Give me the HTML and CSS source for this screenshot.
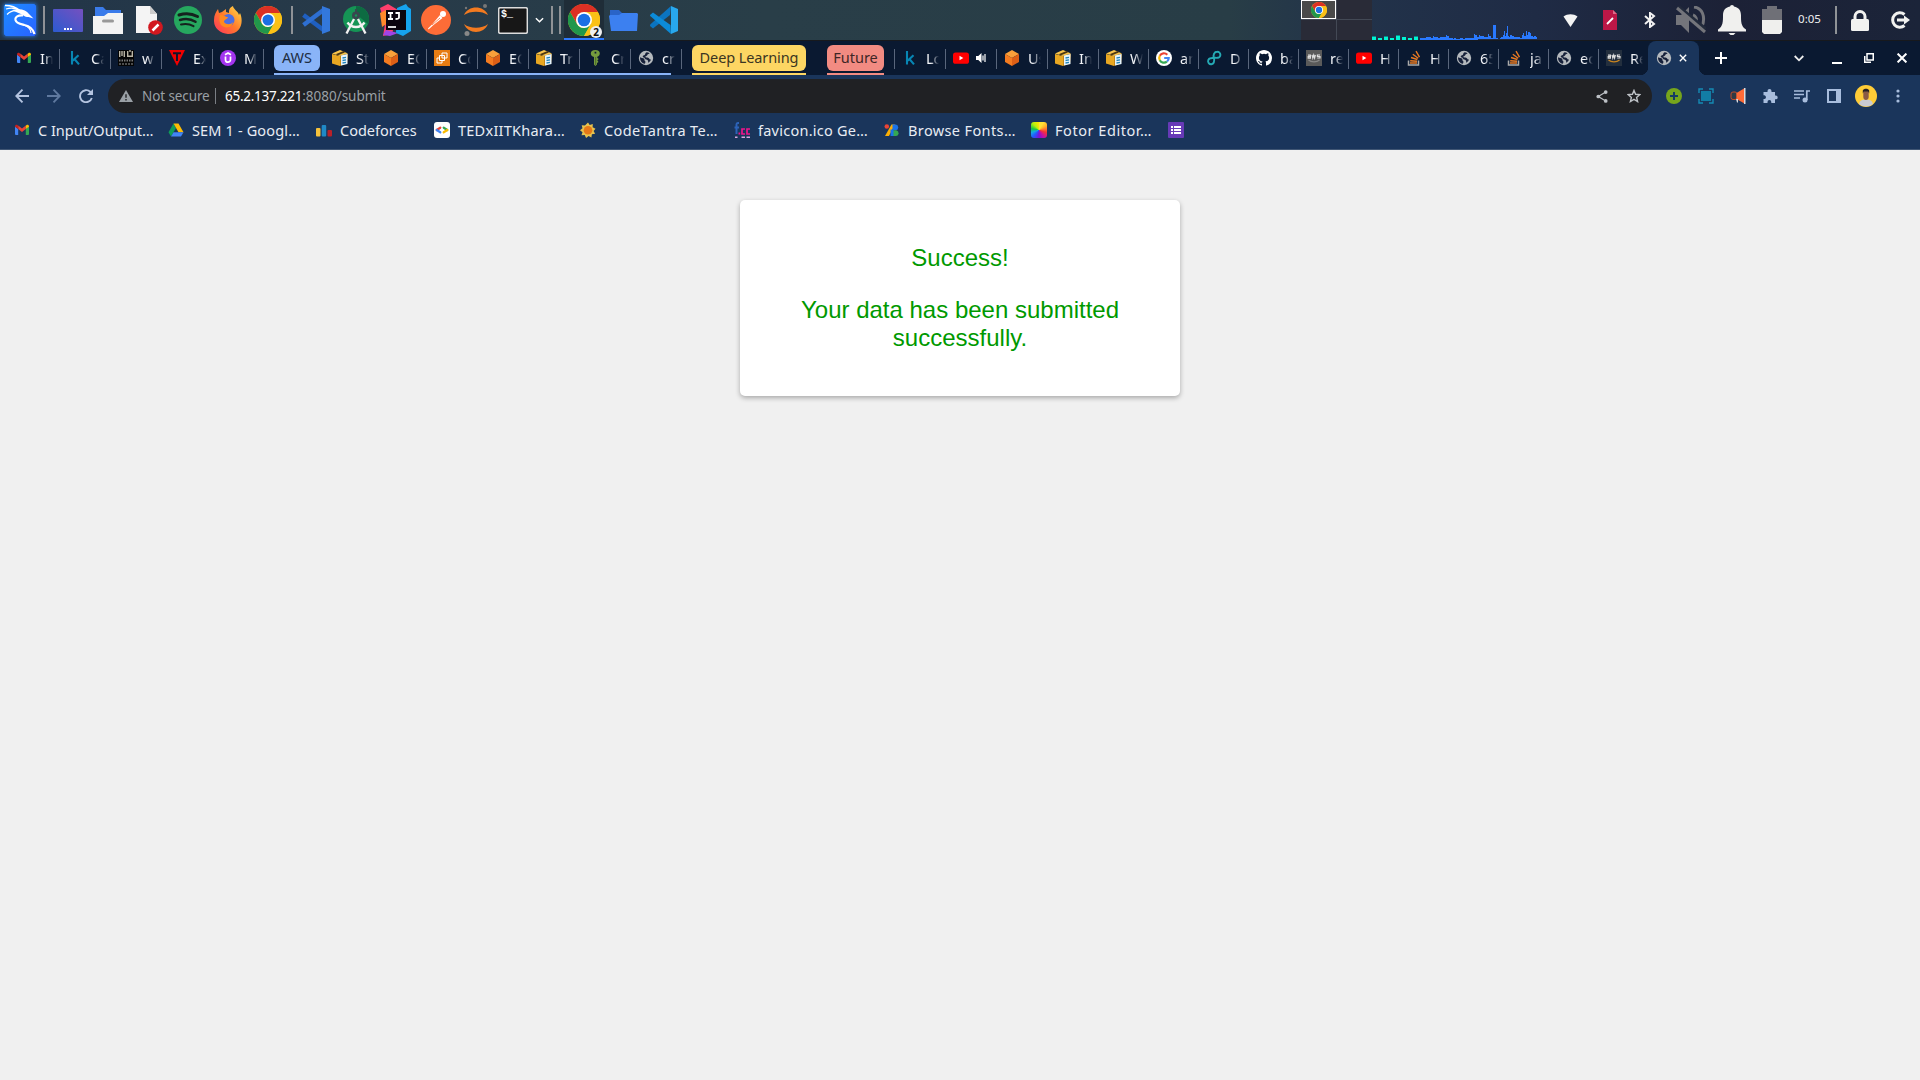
FILE: index.html
```html
<!DOCTYPE html>
<html lang="en">
<head>
<meta charset="utf-8">
<title>Submitted</title>
<link rel="stylesheet" href="styles.css">
</head>
<body>
<svg class="defs" width="0" height="0">
  <defs>
    <linearGradient id="gk" x1="0" y1="0" x2="1" y2="1"><stop offset="0" stop-color="#1b8cff"/><stop offset="1" stop-color="#2a62ff"/></linearGradient>
    <linearGradient id="gd" x1="0" y1="1" x2="1" y2="0"><stop offset="0" stop-color="#2c5bd0"/><stop offset="1" stop-color="#7550c0"/></linearGradient>
    <linearGradient id="gf" x1="0" y1="1" x2="1" y2="0"><stop offset="0" stop-color="#ff2f61"/><stop offset=".5" stop-color="#ff7a2b"/><stop offset="1" stop-color="#ffe34a"/></linearGradient>
  </defs>
  <symbol id="gmail" viewBox="0 0 16 16"><path fill="#4285f4" d="M1 4.5V12a1 1 0 0 0 1 1h2.2V7z"/><path fill="#34a853" d="M11.8 13H14a1 1 0 0 0 1-1V4.5L11.8 7z"/><path fill="#ea4335" d="M4.2 7V3.6L8 6.5l3.8-2.9V7L8 9.9z"/><path fill="#c5221f" d="M1 4.5C1 2.9 2.6 2.5 3.6 3.2l.6.4V7L1 4.7z"/><path fill="#fbbc04" d="M15 4.5c0-1.6-1.6-2-2.6-1.3l-.6.4V7L15 4.7z"/></symbol>
  <symbol id="kaggle" viewBox="0 0 16 16"><path fill="none" stroke="#0786b4" stroke-width="2.100" d="M5 1v13.6M11.5 5.2 5.6 10.8M7.4 9l4.6 5.4"/></symbol>
  <symbol id="mu" viewBox="0 0 16 16"><path fill="#050505" d="M0 0h16v16H0z"/><path fill="none" stroke="#b9b4a4" stroke-width="1.400" d="M1.700 7V1M4 1v5M6.300 7V1M9.700 1v5.300M14.300 1v5.300M9 6.300h6M12 0v2"/><path stroke="#777" stroke-width="2" stroke-dasharray="1.500 1" d="M1 10.500h14"/><path stroke="#666" stroke-width="1.500" stroke-dasharray="2 1" d="M1 14h14"/></symbol>
  <symbol id="tri" viewBox="0 0 16 16"><path fill="#f00000" d="M0 0h16L8 16z"/><path fill="none" stroke="#14142a" stroke-width="2" d="M4 3.200h8M8 3v8"/></symbol>
  <symbol id="udemy" viewBox="0 0 16 16"><circle cx="8" cy="8" r="8" fill="#a435f0"/><path fill="none" stroke="#fff" stroke-width="1.700" d="M5.500 6.500v3.200a2.500 2.500 0 0 0 5 0V6.500M5 4.800 8 3l3 1.800"/></symbol>
  <symbol id="box" viewBox="0 0 16 16"><path fill="#e8a722" d="M0 4l8 2v10l-8-2.500z"/><path fill="#c48415" d="M8 6l8-2-1 9.500L8 16z"/><path fill="#f8c54b" d="M0 3.500 8 0l8 3.500L8 6z"/><path stroke="#4d3813" stroke-width="1.800" d="m4.500 4.800 8-3.200"/><path fill="#e7f4fb" d="M9 5.500 15.500 4v10L9 15.500z"/><path fill="none" stroke="#2083bb" stroke-width="1.300" d="m10.500 8 3.500-.6M10.500 10.500l3.500-.6M10.500 13l3.500-.6"/></symbol>
  <symbol id="hex" viewBox="0 0 16 16"><path fill="#f9a03a" d="M8 0 15 4 8 8 1 4z"/><path fill="#f47b20" d="M1 4l7 4v8l-7-4z"/><path fill="#dd5f16" d="M15 4 8 8v8l7-4z"/></symbol>
  <symbol id="ecs" viewBox="0 0 16 16"><path fill="#e67c13" d="M0 0h16v16H0z"/><path fill="none" stroke="#fff" stroke-width="1" d="M8 3h5v5H8zM5.500 5.500h5v5h-5zM5.500 8H3v5h5v-2.500"/></symbol>
  <symbol id="keys" viewBox="0 0 16 16"><path fill="#759c3e" fill-rule="evenodd" d="M3.800 3.500a4.500 3.500 0 0 1 9 0c0 1.500-1 2.800-2.500 3.300V8l1.500 1-1.500 1.200L11.500 12 10 13v1.500L8.300 16 7 14.500V7c-2-.5-3.200-1.800-3.200-3.500zm3.800-1.700v1.700h1.700V1.800z"/><path stroke="#4a6b2a" d="M8.700 7v8"/></symbol>
  <symbol id="globe" viewBox="0 0 16 16"><circle cx="8" cy="8" r="7.200" fill="#b4b9bd"/><path fill="#17213a" d="M2 7.200c1.500 1 3.200.4 4.200 1.600.6.900-.2 1.600.8 2.300.8.600.3 1.800-.1 2.600C3.500 13.200 1.900 10.200 2 7.200zM8.500 2.200c1.200.1 2.300.5 3.200 1.200l-1.900.9c-.6.500-.3 1.300-1.400 1.600-.9.200-1.500.8-.7 1.400.9.500 2.400.1 3.200.9.700.800 1 1.600 2.100 1.300-.4 1.400-1.400 2.500-2.600 3.200-.6-.8.200-1.600-.7-2.500-.8-.8-2.400-.5-2.800-1.800-.3-1.300-2-.7-2.200-2 .1-1.200 1.400-.6 2-1.300.8-.9.100-1.800 1.800-2.900z"/></symbol>
  <symbol id="youtube" viewBox="0 0 16 16"><rect y="2.400" width="16" height="11.400" rx="2.600" fill="#f00"/><path fill="#fff" d="M6.500 5.700v4.600l3.800-2.300z"/></symbol>
  <symbol id="speaker" viewBox="0 0 12 12"><path fill="#fff" d="M1 4h2.300L6.500 1v10L3.300 8H1z"/><path fill="none" stroke="#fff" stroke-width="1.200" d="M8 3.500v5M10 2v8"/></symbol>
  <symbol id="google" viewBox="0 0 16 16"><circle cx="8" cy="8" r="8" fill="#fff"/><g fill="none" stroke-width="2.200"><path stroke="#ea4335" d="M3.800 5.700A4.700 4.700 0 0 1 11.300 4.700"/><path stroke="#fbbc05" d="M3.900 5.600a4.700 4.700 0 0 0 0 4.800"/><path stroke="#34a853" d="M3.800 10.200a4.700 4.700 0 0 0 7.100 1.400"/><path stroke="#4285f4" d="M8.200 8h4.500c0 1.600-.6 2.700-1.600 3.500"/></g></symbol>
  <symbol id="knot" viewBox="0 0 16 16"><path fill="none" stroke="#25a9b4" stroke-width="1.900" d="M8 8.300c-1.300-3.500.3-6.500 3.300-6.500a3 3 0 0 1 .2 6C9 8 7.500 7.300 4.500 8.300a3 3 0 1 0 3.300 4.200c.4-1.500.6-3 .2-4.200z"/></symbol>
  <symbol id="github" viewBox="0 0 16 16"><path fill="#fff" d="M8 0C3.580 0 0 3.580 0 8c0 3.540 2.290 6.530 5.470 7.590.4.070.55-.17.55-.38 0-.19-.01-.82-.01-1.490-2.010.37-2.530-.49-2.690-.94-.09-.23-.48-.94-.82-1.130-.28-.15-.68-.52-.01-.53.63-.01 1.080.58 1.230.82.72 1.210 1.870.87 2.330.66.07-.52.280-.87.510-1.070-1.780-.2-3.640-.89-3.640-3.950 0-.87.310-1.590.820-2.150-.08-.2-.36-1.020.08-2.120 0 0 .67-.21 2.200.82a7.600 7.600 0 0 1 4 0c1.530-1.040 2.200-.82 2.200-.82.440 1.100.160 1.920.080 2.120.510.560.820 1.270.820 2.150 0 3.070-1.870 3.750-3.650 3.950.290.250.540.730.540 1.480 0 1.070-.01 1.930-.01 2.200 0 .210.150.460.550.380A8 8 0 0 0 16 8c0-4.420-3.580-8-8-8z"/></symbol>
  <symbol id="so" viewBox="0 0 16 16"><path fill="none" stroke="#aaa" stroke-width="1.500" d="M2.500 10.500V15h10v-4.500"/><path fill="none" stroke="#e87922" stroke-width="1.400" d="M4 13h7M4.200 10.700l6.800.5M5 7.500l6.400 2M6.800 4.200l5.400 4M10 1.200l3.500 6"/></symbol>
  <symbol id="smile" viewBox="0 0 16 16"><g fill="none" stroke="#ddd" stroke-width="1.200"><path d="M2 5.200h2.400v3H2.200V6.700h2.200M6 4.800l.8 3.200.9-3 .9 3 .8-3.200M14 5h-2.600v1.500H14V8h-2.800"/></g><path fill="none" stroke="currentColor" stroke-width="1.300" d="M2.500 10c3 2.500 8 2.500 11 0"/></symbol>
  <symbol id="drive" viewBox="0 0 16 16"><path fill="#0f9d58" d="M5.500 1.500 8 6 3 14.500.500 10.300z"/><path fill="#fbbc04" d="M5.500 1.500h5l5 8.800h-5z"/><path fill="#4285f4" d="M3 14.500 5.500 10.300h10L13 14.500z"/></symbol>
  <symbol id="cf" viewBox="0 0 16 16"><rect y="6" width="4.500" height="8.500" rx="1" fill="#f5c23b"/><rect x="5.700" y="3" width="4.500" height="11.500" rx="1" fill="#2089c6"/><rect x="11.500" y="8" width="4.500" height="6.500" rx="1" fill="#ba2129"/></symbol>
  <symbol id="gdsc" viewBox="0 0 16 16"><rect width="16" height="16" rx="3" fill="#fff"/><g fill="none" stroke-width="2.200" stroke-linecap="round"><path stroke="#ea4335" d="m2.700 8 3.600-2.300"/><path stroke="#4285f4" d="m2.700 8 3.600 2.300"/><path stroke="#34a853" d="m9.700 5.700 3.600 2.300"/><path stroke="#fbbc04" d="m9.700 10.300 3.600-2.300"/></g></symbol>
  <symbol id="sun" viewBox="0 0 16 16"><path fill="#e8c24c" d="m8 .5 1.700 2.600 3.100-1-.2 3.200 2.900 1.400L13.600 9l1.500 2.800-3.200.5-.5 3.200L8.600 14l-2.500 2-1.400-2.900-3.200.1 1-3L0 8.300l2.500-2L1.700 3.200l3.200.2z"/><circle cx="8" cy="8.300" r="4.300" fill="#e67817"/></symbol>
  <symbol id="fcc" viewBox="0 0 16 16"><path fill="none" stroke="#2c63b8" stroke-width="2" d="M5 1H3.700C2.800 1 2.500 1.600 2.500 2.500V12M.5 5.500H5"/><path fill="#f0148c" d="M4.500 10.500h1.700v2H4.500z"/><path fill="none" stroke="#f0148c" stroke-width="1.700" d="M11 7H8v5h3M16 7h-3v5h3"/><path stroke="#d9a9e0" stroke-width="1.500" d="M1 15.200h2.500M7.500 15.200H11M12.500 15.200H16"/></symbol>
  <symbol id="gfonts" viewBox="0 0 16 16"><circle cx="2.800" cy="4.500" r="2.300" fill="#ea4335"/><path fill="#fbaf04" d="M7.500 2.500H11L5 14H1z"/><path fill="#1a73e8" d="M8.500 2.500H12a3 3 0 0 1 0 5.800H8.500z"/><path fill="#34a853" d="M9 8.300h3.200a2.900 2.900 0 0 1 0 5.700H9z"/><path fill="#1a73e8" d="M6.500 7.500h3V14h-3z"/></symbol>
  <symbol id="forms" viewBox="0 0 16 16"><rect width="16" height="16" rx="1" fill="#673ab7"/><path stroke="#fff" stroke-width="2" d="M3 5h2M6 5h7M3 8h2M6 8h7M3 11h2M6 11h7"/></symbol>
  <symbol id="chrome" viewBox="0 0 32 32"><circle cx="16" cy="16" r="16" fill="#fbc116"/><path fill="#dc3024" d="M2.100 8A16 16 0 0 1 29.900 8H16L9.100 20z"/><path fill="#21974b" d="M2.100 8l6.900 12a8 8 0 0 0 7 4l6.900-4L16 32A16 16 0 0 1 2.100 8z"/><path fill="#fbc116" d="M29.900 8A16 16 0 0 1 16 32l6.900-12A8 8 0 0 0 22.900 12L16 8z"/><circle cx="16" cy="16" r="8" fill="#fff"/><circle cx="16" cy="16" r="6.300" fill="#1b6fe4"/></symbol>
  <symbol id="vscode" viewBox="0 0 28 28"><path fill="#0b74c0" d="m21 0-1 9L3 22.500 0 20 .2 18.500z"/><path fill="#0c8bd8" d="m0 9 3-2.500L20.500 19l.5 9L.2 10z"/><path fill="#28a8ee" d="M21 0l7 3v22l-7 3z"/></symbol>
  <symbol id="code" viewBox="0 0 28 28"><path fill="none" stroke="#1f5fc0" stroke-width="4.500" d="m1.500 9 20 15"/><path fill="none" stroke="#2e6fd2" stroke-width="4.500" d="m1.500 19 20-15"/><path fill="#3378dc" d="M20 0l8 3v22l-8 3z"/></symbol>
</svg>

<header class="panel">
  <div class="launchers">
    <span class="slot"><svg class="kali" viewBox="0 0 32 32" width="32" height="32"><rect width="32" height="32" rx="2" fill="url(#gk)"/><path fill="none" stroke="#fff" stroke-width="1.300" d="M1 1.500c6 0 11 1.500 15 5M2 5c5-1.500 10-1 14 2M3 10.500c4-4 9-4.500 13-3"/><path fill="#fff" d="M8 6c8-2 14-.5 17 4l4.500 4.500-5-1.500c-2 0-3.500-.5-5-1.500C16 9.500 12 8 8 6z"/><path fill="none" stroke="#fff" stroke-width="2.200" d="M19 11.500c-5-.5-8 1.500-7.500 4.500.8 3.500 5 4 9 5 5 1 8.500 4 10 9"/><path fill="none" stroke="#fff" stroke-width="1.200" d="M20 21c5 2 7 5 7 8"/></svg></span>
    <i class="rule"></i>
    <span class="slot"><svg viewBox="0 0 30 23" width="30" height="23"><rect width="30" height="23" rx="1" fill="url(#gd)"/><path stroke="#fff" stroke-width="2" stroke-dasharray="2 1" d="M11 20h8"/></svg></span>
    <span class="slot"><svg viewBox="0 0 30 27" width="30" height="27"><path fill="#3a7bea" d="M2 0h8l3 3h15v8H2z"/><path fill="#f3f3f3" d="M0 9h11l4-3h15v21H0z"/><path stroke="#999" stroke-width="3" stroke-linecap="round" d="M10.500 14h9"/></svg></span>
    <span class="slot"><svg viewBox="-2 0 30 30" width="30" height="30"><path fill="#f4f4f4" d="M1 1h14l7 8v19H1z"/><path fill="#ccc" d="M15 1l7 8h-7z"/><circle cx="20.500" cy="22.500" r="7.300" fill="#d2181f"/><path stroke="#fff" stroke-width="2.500" d="m17.500 25.500 6-6"/></svg></span>
    <span class="slot"><svg viewBox="0 0 28 28" width="28" height="28"><circle cx="14" cy="14" r="14" fill="#26a85f"/><g fill="none" stroke="#15231e" stroke-linecap="round"><path stroke-width="3" d="M5 9c6-2 13-1.500 18.500 1.500"/><path stroke-width="2.500" d="M6 14c5-1.500 11-1 15.500 1.800"/><path stroke-width="2" d="M7 18.500c4-1 8.500-.7 12.500 1.700"/></g></svg></span>
    <span class="slot"><svg viewBox="0 0 28 28" width="28" height="28"><path fill="url(#gf)" d="M14 28A14 13.500 0 0 1 0 14C0 9 2 6 4 3l1 4 3-1 4-3v3l3 1c0-3 0-5 4-7 0 3 5 5 6 9l1-2c4 9 1 21-12 21z"/><circle cx="14.500" cy="14" r="6" fill="#4c6fe0"/><path fill="#ff8a1f" d="M6 9c4 0 5 2 8 2-1 3-4 2-4 5 2 3 7 3 9 0-1 6-8 7-12 3-2-3-2-7-1-10z"/></svg></span>
    <span class="slot"><svg width="28" height="28"><use href="#chrome"/></svg></span>
    <i class="rule"></i>
    <span class="slot"><svg width="28" height="28"><use href="#code"/></svg></span>
    <span class="slot"><svg viewBox="0 0 28 28" width="28" height="28"><circle cx="14" cy="13" r="13" fill="#159455"/><path fill="#0d6b42" d="M14 0A13 13 0 0 1 26 18L14 8z"/><path stroke="#37474f" stroke-width="2" d="M14 3v5"/><circle cx="14" cy="9.500" r="4" fill="#37474f"/><circle cx="14" cy="9.500" r="1.200" fill="#159455"/><path fill="none" stroke="#f2f2f2" stroke-width="2.300" d="M12 13 4.500 27.500M16 13l7.500 14.500M5.500 16.500c4 6 13 6 17 0"/></svg></span>
    <span class="slot"><svg viewBox="0 0 32 32" width="32" height="32"><path fill="#fd3f6c" d="M0 4l8-4 10 6-6 24-9 2 2-12z"/><path fill="#ff8a2b" d="m0 9 6-3 3 12-7 5z"/><path fill="#a044e8" d="m6 26 12 3-8 3-7-1z"/><path fill="#16a3ee" d="M17 4l9-4 2 3 3 2v22l-8 5-7-3z"/><rect x="6" y="6" width="20" height="20" fill="#0b0510"/><path fill="none" stroke="#fff" stroke-width="1.800" d="M8 9h5M10.500 9v6M8 15h5M15.500 9h3.500v4.500c0 1-1 1.500-3.500 1.500"/><path stroke="#fff" stroke-width="1.700" d="M8 23h8"/></svg></span>
    <span class="slot"><svg viewBox="0 0 30 30" width="30" height="30"><circle cx="15" cy="15" r="15" fill="#fd6c37"/><circle cx="22" cy="9" r="3" fill="#fff"/><path fill="#fff" d="m19 10 2.500 3-9 7-5 4.500-.5-1 4-4z"/><path stroke="#fd6c37" stroke-width=".8" d="m11 20 8-7"/></svg></span>
    <span class="slot"><svg viewBox="0 0 24 32" width="24" height="32"><path fill="#f37a20" d="M0 11C4 1 20 1 24 11 18 6.500 6 6.500 0 11zM0 20c4 10.500 20 10.500 24 0-6 5-18 5-24 0z"/><circle cx="21" cy="2" r="2" fill="#777"/><circle cx="3" cy="29.500" r="2.500" fill="#888"/><circle cx="2" cy="4" r="1.200" fill="#777"/></svg></span>
    <span class="slot term"><svg viewBox="0 0 30 27" width="30" height="27"><rect x=".7" y=".7" width="28.600" height="25.600" rx="1.500" fill="#171717" stroke="#ddd" stroke-width="1.500"/></svg><b>$_</b></span>
    <span class="more"><svg viewBox="0 0 10 6" width="9" height="6"><path fill="none" stroke="#fff" stroke-width="1.600" d="m1 1 4 4 4-4"/></svg></span>
    <i class="rule"></i><i class="rule"></i>
    <span class="slot running"><svg width="32" height="32"><use href="#chrome"/></svg><em>2</em></span>
    <span class="slot"><svg viewBox="0 0 30 21" width="30" height="21"><path fill="#2a64c8" d="M1 0h9l3 3h15v5H1z"/><path fill="#3c80f0" d="M1 5h9l3-2h15l1 1-1 17H2L0 6z"/></svg></span>
    <span class="slot"><svg width="28" height="28"><use href="#vscode"/></svg></span>
  </div>
  <div class="tray">
    <div class="pager"><span class="here"><svg width="16" height="16"><use href="#chrome"/></svg></span><span></span><span></span><span></span></div>
    <svg class="graph" viewBox="0 0 176 40" width="176" height="40" shape-rendering="crispEdges">
      <path fill="#00f5d4" d="M0 37h4v3H0zM6 38h4v2H6zM12 37h4v3h-4zM18 38h4v2h-4zM24 36h4v4h-4zM30 37h4v3h-4zM36 38h4v2h-4zM42 37h4v3h-4z"/>
      <path fill="#0b8b87" d="M0 36h4v1H0zM12 36h4v1h-4zM24 35h4v1h-4zM42 36h4v1h-4z"/>
      <path fill="#2979ff" d="M48 40v-2h6v-1h5v1h2v-2h1v1h4v1h2v-1h6v-2h1v1h2v2h4v1h1v-1h2v1h4v-1h3v1h2v-1h9v-4h1v1h2v2h2v-2h1v1h4v1h4v-3h1v2h2v2h2V25h3v13h2v1h2v-1h1v-1h2v-2h1v-4h1v5h1v-3h1v-7h1v10h1v1h1v-2h2v1h2v1h6v1h2v-3h1v-2h1v3h2v-5h1v4h1v-3h2v1h1v3h2v1h1v-1h2v1h1v2z"/>
    </svg>
    <span class="slot"><svg viewBox="0 0 14 13" width="15" height="13"><path fill="#f4f4f4" d="M0 2.500C4-.5 10-.5 14 2.500L7 13z"/></svg></span>
    <span class="slot"><svg viewBox="0 0 14 20" width="14" height="20"><path fill="#bd1747" d="M0 0h10l4 4v16H0z"/><path fill="#e06a88" d="M10 0l4 4h-4z"/><path stroke="#fff" stroke-width="1.800" d="m4 14 6-6"/></svg></span>
    <span class="slot"><svg viewBox="0 0 12 16" width="12" height="16"><path fill="none" stroke="#f2f2f2" stroke-width="2" d="m1 4 9 8-4 3V1l4 3-9 8"/></svg></span>
    <span class="slot mute"><svg viewBox="0 0 30 28" width="30" height="28"><path fill="#74757b" d="M0 9h5l8-8v26l-8-8H0z"/><path fill="none" stroke="#74757b" stroke-width="3" d="M18 1c8 1 12 9 8 20M17 9c3 1 4 4 3 7"/><path stroke="#222a3b" stroke-width="3" d="m2 0 28 23"/><path stroke="#74757b" stroke-width="3" d="m1 2 28 24"/></svg></span>
    <span class="slot"><svg viewBox="0 0 28 30" width="28" height="30"><path fill="#f0f0ee" d="M12 1.500h4c5 1 7 4 7 9 0 6 0 11 5 14v2H0v-2c5-3 5-8 5-14 0-5 2-8 7-9zM10.500 28h7l-2 2h-3z"/><circle cx="14" cy="2" r="2" fill="#f0f0ee"/></svg></span>
    <span class="slot"><svg viewBox="0 0 20 28" width="20" height="28"><path fill="#6f7077" d="M0 3h5V0h10v3h5v12H0z"/><path fill="#efefed" d="M0 14h20v12l-2 2H2l-2-2z"/></svg></span>
    <time>0:05</time>
    <i class="rule wide"></i>
    <span class="slot"><svg viewBox="0 0 18 21" width="18" height="21"><rect y="9" width="18" height="12" rx="1.500" fill="#f2f2f0"/><path fill="none" stroke="#f2f2f0" stroke-width="3" d="M4 10V6.500a5 5 0 0 1 10 0V10"/></svg></span>
    <span class="slot"><svg viewBox="0 0 20 18" width="20" height="18"><path fill="none" stroke="#f2f2f0" stroke-width="3" d="M14.500 3.500A7.200 7.200 0 1 0 14.500 14.500M7 9h9"/><path fill="#f2f2f0" d="m14 4.500 6 4.500-6 4.500z"/></svg></span>
  </div>
</header>

<nav class="tabs">
  <div class="tab"><svg><use href="#gmail"/></svg><span>In</span></div>
  <div class="tab"><svg><use href="#kaggle"/></svg><span>Ca</span></div>
  <div class="tab"><svg><use href="#mu"/></svg><span>w</span></div>
  <div class="tab"><svg><use href="#tri"/></svg><span>Ex</span></div>
  <div class="tab"><svg><use href="#udemy"/></svg><span>M</span></div>
  <div class="group aws"><b>AWS</b></div>
  <div class="tab in-aws"><svg><use href="#box"/></svg><span>St</span></div>
  <div class="tab in-aws"><svg><use href="#hex"/></svg><span>EC</span></div>
  <div class="tab in-aws"><svg><use href="#ecs"/></svg><span>Co</span></div>
  <div class="tab in-aws"><svg><use href="#hex"/></svg><span>EC</span></div>
  <div class="tab in-aws"><svg><use href="#box"/></svg><span>Tr</span></div>
  <div class="tab in-aws"><svg><use href="#keys"/></svg><span>Cr</span></div>
  <div class="tab in-aws last"><svg><use href="#globe"/></svg><span>cr</span></div>
  <div class="group deep"><b>Deep Learning</b></div>
  <div class="group future"><b>Future</b></div>
  <div class="tab"><svg><use href="#kaggle"/></svg><span>Lo</span></div>
  <div class="tab audio"><svg><use href="#youtube"/></svg><svg class="sound"><use href="#speaker"/></svg></div>
  <div class="tab"><svg><use href="#hex"/></svg><span>Us</span></div>
  <div class="tab"><svg><use href="#box"/></svg><span>In</span></div>
  <div class="tab slim"><svg><use href="#box"/></svg><span>W</span></div>
  <div class="tab slim"><svg><use href="#google"/></svg><span>an</span></div>
  <div class="tab slim"><svg><use href="#knot"/></svg><span>D</span></div>
  <div class="tab slim"><svg><use href="#github"/></svg><span>ba</span></div>
  <div class="tab slim"><svg class="aws-gray"><use href="#smile"/></svg><span>re</span></div>
  <div class="tab slim"><svg><use href="#youtube"/></svg><span>H</span></div>
  <div class="tab slim"><svg><use href="#so"/></svg><span>H</span></div>
  <div class="tab slim"><svg><use href="#globe"/></svg><span>65</span></div>
  <div class="tab slim"><svg><use href="#so"/></svg><span>ja</span></div>
  <div class="tab slim"><svg><use href="#globe"/></svg><span>ec</span></div>
  <div class="tab slim bare"><svg class="aws-dark"><use href="#smile"/></svg><span>Re</span></div>
  <div class="tab active"><svg><use href="#globe"/></svg><svg class="close" viewBox="0 0 10 10"><path stroke="#fff" stroke-width="1.700" d="m1 1 8 8M9 1 1 9"/></svg></div>
  <div class="new"><svg viewBox="0 0 12 12" width="12" height="12"><path stroke="#fff" stroke-width="2" d="M6 0v12M0 6h12"/></svg></div>
  <div class="window">
    <span><svg viewBox="0 0 10 7" width="10" height="7"><path fill="none" stroke="#eee" stroke-width="1.800" d="m.7 1 4.300 4.300L9.300 1"/></svg></span>
    <span class="min"><svg width="10" height="2"><path fill="#fff" d="M0 0h10v2H0z"/></svg></span>
    <span><svg viewBox="0 0 10 10" width="10" height="10"><path fill="none" stroke="#fff" stroke-width="1.500" d="M3 .75h6.250V7H3zM.75 3v6.250H7"/></svg></span>
    <span><svg viewBox="0 0 10 10" width="10" height="10"><path stroke="#fff" stroke-width="2" d="m.6.6 8.800 8.800M9.400.6.6 9.400"/></svg></span>
  </div>
</nav>

<div class="toolbar">
  <span class="tool"><svg viewBox="0 0 14 14" width="14" height="14"><path fill="none" stroke="#b4c4e0" stroke-width="1.900" d="M14 7H1.500M7.500.7 1.300 7l6.200 6.300"/></svg></span>
  <span class="tool"><svg viewBox="0 0 14 14" width="14" height="14"><path fill="none" stroke="#5f799f" stroke-width="1.900" d="M0 7h12.500M6.500.7 12.700 7l-6.200 6.300"/></svg></span>
  <span class="tool"><svg viewBox="0 0 14 14" width="14" height="14"><path fill="none" stroke="#b4c4e0" stroke-width="1.900" d="M12.800 9A6 6 0 1 1 11.200 2.800l1.500 1.500"/><path fill="#b4c4e0" d="M14 0v6H8z"/></svg></span>
  <div class="omnibox">
    <svg class="warn" viewBox="0 0 14 12" width="14" height="12"><path fill="#9aa0a6" d="M7 0l7 12H0z"/><path stroke="#202124" stroke-width="1.400" d="M7 4.300v3.400M7 9v1.500"/></svg>
    <span class="secure">Not secure</span><i></i><span class="url"><b>65.2.137.221</b>:8080/submit</span>
    <span class="tool push"><svg viewBox="0 0 12 14" width="12" height="13"><g fill="#bdc1c6"><circle cx="10" cy="2.200" r="2"/><circle cx="2" cy="7" r="2"/><circle cx="10" cy="11.800" r="2"/></g><path fill="none" stroke="#bdc1c6" stroke-width="1.300" d="M10 2.200 2 7l8 4.800"/></svg></span>
    <span class="tool"><svg viewBox="0 0 14 14" width="14" height="14"><path fill="none" stroke="#bdc1c6" stroke-width="1.400" d="m7 1.400 1.600 3.900 4.200.3-3.200 2.800 1 4.100L7 10.300l-3.600 2.200 1-4.100L1.200 5.600l4.200-.3z"/></svg></span>
  </div>
  <span class="tool"><svg viewBox="0 0 16 16" width="16" height="16"><circle cx="8" cy="8" r="8" fill="#76a51c"/><path stroke="#163a63" stroke-width="2" d="M8 4v8M4 8h8"/></svg></span>
  <span class="tool"><svg viewBox="0 0 16 16" width="16" height="16"><path fill="#127da5" d="M3 3h10v10H3z"/><path fill="none" stroke="#168bb4" stroke-width="1.400" d="M1 5V1h4M11 1h4v4M15 11v4h-4M5 15H1v-4"/></svg></span>
  <span class="tool"><svg viewBox="0 0 16 16" width="16" height="16"><rect x="1" y="4" width="6" height="7.500" rx="2" fill="#303a45" stroke="#c24c29"/><path fill="#ff6b38" d="M6.500 5 14 .5v14.800L6.500 11z"/><path fill="#d9dbe0" d="M14 0h1.500v16H14zM6 11h2v3.500H7z"/></svg></span>
  <span class="tool"><svg viewBox="0 0 16 16" width="16" height="16"><path fill="#a8bddd" d="M1.500 4h4V3a2 2 0 0 1 4 0v1H13v3.500h.8a1.900 1.900 0 0 1 0 3.800H13V15H9.300v-1a1.900 1.900 0 0 0-3.800 0v1h-4v-4h1a1.900 1.900 0 0 0 0-3.700h-1z"/></svg></span>
  <span class="tool"><svg viewBox="0 0 16 14" width="16" height="14"><path stroke="#a8bddd" stroke-width="1.600" d="M0 2h10M0 5.500h10M0 9h6"/><path fill="none" stroke="#a8bddd" stroke-width="1.700" d="M16 2h-3.200v9"/><circle cx="11" cy="11" r="2.500" fill="#a8bddd"/></svg></span>
  <span class="tool"><svg viewBox="0 0 14 14" width="14" height="14"><path fill="none" stroke="#a8bddd" stroke-width="2" d="M1 1h12v12H1z"/><path fill="#a8bddd" d="M9 0h5v14H9z"/></svg></span>
  <span class="tool"><svg viewBox="0 0 22 22" width="22" height="22"><circle cx="11" cy="11" r="11" fill="#ffcc37"/><path fill="#c9cbd3" d="M4 19c1-4 4-4.500 7-4.500s6 .5 7 4.500a11 11 0 0 1-14 0z"/><path fill="#8a5a45" d="M8.300 6h5.400v6c0 4-5.400 4-5.400 0z"/><path fill="#262023" d="M7.800 8.500V5.500c.8-2.500 5.600-2.500 6.400 0v3l-1-2H8.800z"/></svg></span>
  <span class="tool"><svg viewBox="0 0 4 14" width="4" height="14"><g fill="#a8bddd"><circle cx="2" cy="2" r="1.600"/><circle cx="2" cy="7" r="1.600"/><circle cx="2" cy="12" r="1.600"/></g></svg></span>
</div>

<div class="bookmarks">
  <a><svg><use href="#gmail"/></svg>C Input/Output…</a>
  <a class="s1"><svg><use href="#drive"/></svg>SEM 1 - Googl…</a>
  <a><svg><use href="#cf"/></svg>Codeforces</a>
  <a class="s2"><svg><use href="#gdsc"/></svg>TEDxIITKhara…</a>
  <a class="s3"><svg><use href="#sun"/></svg>CodeTantra Te…</a>
  <a class="s2"><svg><use href="#fcc"/></svg>favicon.ico Ge…</a>
  <a class="s3"><svg><use href="#gfonts"/></svg>Browse Fonts…</a>
  <a class="s4"><i class="wheel"></i>Fotor Editor…</a>
  <a><svg><use href="#forms"/></svg></a>
</div>

<main>
  <section class="card">
    <p>Success!</p>
    <p>Your data has been submitted successfully.</p>
  </section>
</main>
</body>
</html>
```
FILE: styles.css
```css
* { box-sizing: border-box; }
body {
  margin: 0;
  height: 1080px;
  overflow: hidden;
  background: #f0f0f0;
  font-family: "Noto Sans", sans-serif;
  display: flex;
  flex-direction: column;
}
svg { display: block; flex: none; }
.defs { position: absolute; }

/* desktop panel */
.panel {
  height: 41px;
  border-bottom: 1px solid #17191d;
  background: linear-gradient(90deg, #223548 0, #273a49 18%, #293e48 40%, #283d46 64%, #22334a 70%, #1f2b45 80%, #1c2136 90%, #1b2439 100%);
  display: flex;
  justify-content: space-between;
  flex: none;
}
.launchers, .tray { display: flex; height: 40px; }
.slot { width: 40px; height: 40px; display: flex; align-items: center; justify-content: center; position: relative; }
.kali { box-shadow: 0 0 4px #2a86ff; }
.rule { width: 8px; height: 28px; margin-top: 6px; background: linear-gradient(#8f9296, #8f9296) center / 2px 100% no-repeat; }
.term { width: 34px; }
.term b { position: absolute; left: 5px; top: 8px; font: bold 10px/14px "Liberation Mono", monospace; color: #fff; }
.more { width: 18px; display: flex; align-items: center; justify-content: center; }
.running { background: #1f2d38; border-bottom: 2px solid #2f7bff; }
.running svg { margin-top: 2px; }
.running em {
  position: absolute; left: 26px; top: 26px; width: 12px; height: 12px; border-radius: 50%;
  background: #f0f0f0; color: #111; font: bold 10px/12px "Noto Sans", sans-serif; text-align: center;
}
.pager { width: 71px; display: grid; grid-template-columns: 35px 35px; grid-template-rows: 19px 20px; gap: 1px; background: #434955; }
.pager span { background: #292b37; display: flex; align-items: center; justify-content: center; }
.pager .here { background: #4a4a4a; border: 1px solid #fff; }
.graph { margin-right: 2px; }
.mute { width: 42px; }
time { width: 35px; font-size: 11.5px; line-height: 38px; text-align: center; color: #eee; }
.tray .wide { width: 18px; margin-right: -5px; }

/* tab strip */
.tabs { height: 34px; background: #0a1931; display: flex; padding-left: 9px; flex: none; }
.tab {
  width: 51px; display: flex; align-items: center; padding-left: 7px; gap: 8px; font-size: 14.5px; color: #f2f4f8;
  background: linear-gradient(#59667c, #59667c) right 8px / 1px 20px no-repeat;
}
.tab svg { width: 16px; height: 16px; }
.tab span {
  width: 13px; overflow: hidden; white-space: nowrap; line-height: 24px;
  -webkit-mask-image: linear-gradient(90deg, #000 35%, transparent);
  mask-image: linear-gradient(90deg, #000 35%, transparent);
}
.slim { width: 50px; }
.bare { width: 49px; background: none; }
.in-aws { box-shadow: inset 0 -2px #8ab4f8; }
.last { box-shadow: none; background: linear-gradient(#59667c, #59667c) right 8px / 1px 20px no-repeat, linear-gradient(#8ab4f8, #8ab4f8) left bottom / 40px 2px no-repeat; }
.audio { gap: 6px; }
.tab .sound { width: 12px; height: 12px; }
.aws-gray { background: #5a5a5a; color: #888; }
.aws-dark { background: #232f3e; color: #c98420; }
.group { padding: 4px 0 2px 10px; }
.group b { display: block; height: 26px; border-radius: 6px; font-weight: 400; font-size: 14.5px; line-height: 25px; text-align: center; color: #202d43; }
.aws { width: 61px; background: linear-gradient(#8ab4f8, #8ab4f8) 10px bottom / 60px 2px no-repeat; padding-right: 5px; }
.aws b { background: #8ab4f8; }
.deep { width: 124px; background: linear-gradient(#fdd663, #fdd663) 10px bottom / 114px 2px no-repeat; }
.deep b { background: #fdd663; color: #3b3521; letter-spacing: -.1px; }
.future {
  width: 89px; padding: 4px 11px 2px 21px;
  background: linear-gradient(#f28b82, #f28b82) 21px bottom / 57px 2px no-repeat, linear-gradient(#59667c, #59667c) right 8px / 1px 20px no-repeat;
}
.future b { background: #f28b82; color: #3e2626; }
.active { width: 51px; background: #1a355b; border-radius: 8px 8px 0 0; padding-left: 8px; gap: 7px; position: relative; }
.active::before, .active::after { content: ""; position: absolute; bottom: 0; width: 8px; height: 8px; }
.active::before { left: -8px; background: radial-gradient(circle at 0 0, transparent 8px, #1a355b 8.5px); }
.active::after { right: -8px; background: radial-gradient(circle at 100% 0, transparent 8px, #1a355b 8.5px); }
.tab .close { width: 8px; height: 8px; }
.new { width: 44px; display: flex; align-items: center; justify-content: center; }
.window { margin-left: auto; display: grid; grid-template-columns: 42px 34px 30px 36px; }
.window span { display: flex; align-items: center; justify-content: center; }
.window .min { padding-top: 9px; }

/* navigation toolbar */
.toolbar { height: 42px; background: #1a355b; display: flex; align-items: center; padding: 0 6px; flex: none; }
.tool { width: 32px; height: 32px; display: flex; align-items: center; justify-content: center; flex: none; }
.omnibox {
  flex: 1; height: 34px; margin: 0 6px; padding: 0 2px 0 11px; border-radius: 17px; background: #202124;
  display: flex; align-items: center; font-size: 13.5px; color: #9aa0a6; white-space: nowrap;
}
.omnibox i { width: 1px; height: 16px; margin: 0 9px 0 7px; background: #7b7f85; }
.warn { margin-right: 9px; }
.secure { width: 66px; letter-spacing: -.1px; }
.url b { font-weight: 400; color: #fff; letter-spacing: -.27px; }
.push { margin-left: auto; }

/* bookmarks bar */
.bookmarks {
  height: 33px; background: #1a355b; border-bottom: 1px solid #405674; padding: 0 0 6px 14px; flex: none;
  display: grid; grid-template-columns: 154px 148px 118px 146px 154px 150px 147px 137px 16px; align-items: center;
}
.bookmarks a { display: flex; align-items: center; gap: 8px; font-size: 14.5px; line-height: 24px; white-space: nowrap; color: #e8ecf3; }
.bookmarks svg { width: 16px; height: 16px; }
.bookmarks .s1 { letter-spacing: .15px; }
.bookmarks .s2 { letter-spacing: .25px; }
.bookmarks .s3 { letter-spacing: .38px; }
.bookmarks .s4 { letter-spacing: .55px; }
.wheel {
  width: 16px; height: 16px; border-radius: 3px;
  background: conic-gradient(#ffe135 0 8%, #ffb52a 16%, #ff6a30 24%, #f53535 30%, #c512a0 40%, #7a10d8 50%, #205cff 62%, #16a8e0 70%, #18c840 78%, #b6ee10 88%, #ffe600);
}

/* page */
main { flex: 1; padding-top: 50px; font-family: "Liberation Sans", Arial, sans-serif; }
.card {
  width: 440px; margin: 0 auto; padding: 20px; border-radius: 5px; background: #fff;
  box-shadow: 0 2px 5px rgba(0, 0, 0, .3); text-align: center; font-size: 24px; color: #090;
}
.card p { margin: 24px 0; }
```
